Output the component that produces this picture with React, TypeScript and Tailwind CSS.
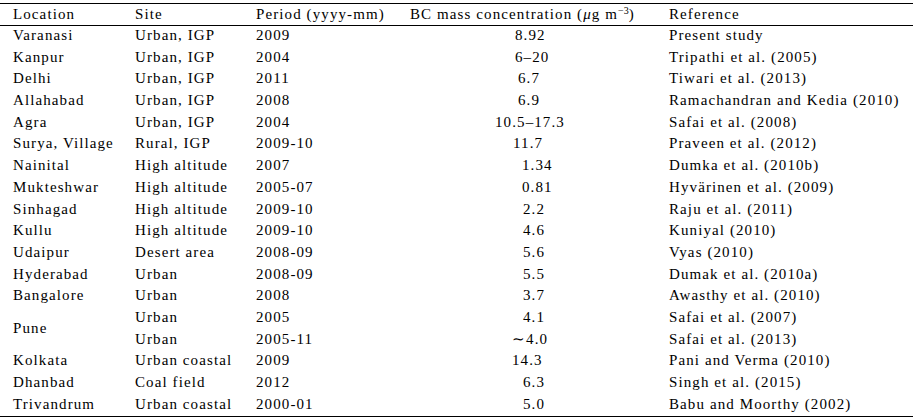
import React from "react";

type Row = {
  loc?: string;
  span?: boolean;
  site: string;
  period: string;
  val: string;
  pad: string;
  ref: string;
};

const rows: Row[] = [
  { loc: "Varanasi", site: "Urban, IGP", period: "2009", val: "8.92", pad: "pl-[109px]", ref: "Present study" },
  { loc: "Kanpur", site: "Urban, IGP", period: "2004", val: "6–20", pad: "pl-[109px]", ref: "Tripathi et al. (2005)" },
  { loc: "Delhi", site: "Urban, IGP", period: "2011", val: "6.7", pad: "pl-[112px]", ref: "Tiwari et al. (2013)" },
  { loc: "Allahabad", site: "Urban, IGP", period: "2008", val: "6.9", pad: "pl-[112px]", ref: "Ramachandran and Kedia (2010)" },
  { loc: "Agra", site: "Urban, IGP", period: "2004", val: "10.5–17.3", pad: "pl-[89px]", ref: "Safai et al. (2008)" },
  { loc: "Surya, Village", site: "Rural, IGP", period: "2009-10", val: "11.7", pad: "pl-[107px]", ref: "Praveen et al. (2012)" },
  { loc: "Nainital", site: "High altitude", period: "2007", val: "1.34", pad: "pl-[116px]", ref: "Dumka et al. (2010b)" },
  { loc: "Mukteshwar", site: "High altitude", period: "2005-07", val: "0.81", pad: "pl-[116px]", ref: "Hyvärinen et al. (2009)" },
  { loc: "Sinhagad", site: "High altitude", period: "2009-10", val: "2.2", pad: "pl-[117px]", ref: "Raju et al. (2011)" },
  { loc: "Kullu", site: "High altitude", period: "2009-10", val: "4.6", pad: "pl-[117px]", ref: "Kuniyal (2010)" },
  { loc: "Udaipur", site: "Desert area", period: "2008-09", val: "5.6", pad: "pl-[117px]", ref: "Vyas (2010)" },
  { loc: "Hyderabad", site: "Urban", period: "2008-09", val: "5.5", pad: "pl-[117px]", ref: "Dumak et al. (2010a)" },
  { loc: "Bangalore", site: "Urban", period: "2008", val: "3.7", pad: "pl-[117px]", ref: "Awasthy et al. (2010)" },
  { loc: "Pune", span: true, site: "Urban", period: "2005", val: "4.1", pad: "pl-[117px]", ref: "Safai et al. (2007)" },
  { site: "Urban", period: "2005-11", val: "∼4.0", pad: "pl-[106px]", ref: "Safai et al. (2013)" },
  { loc: "Kolkata", site: "Urban coastal", period: "2009", val: "14.3", pad: "pl-[106px]", ref: "Pani and Verma (2010)" },
  { loc: "Dhanbad", site: "Coal field", period: "2012", val: "6.3", pad: "pl-[117px]", ref: "Singh et al. (2015)" },
  { loc: "Trivandrum", site: "Urban coastal", period: "2000-01", val: "5.0", pad: "pl-[117px]", ref: "Babu and Moorthy (2002)" },
];

const cell = "leading-[18px] whitespace-nowrap";

export default function App() {
  return (
    <div
      className="w-[913px] h-[420px] bg-white text-black pt-[3px] text-[15px] tracking-[1.1px] overflow-hidden"
      style={{ fontFamily: '"Liberation Serif", "Times New Roman", serif' }}
    >
      <div className="h-px bg-black" />
      <div className="grid grid-cols-[122px_121px_150px_263px_1fr] pl-[13px] h-[21px] items-center">
        <div className="leading-[21px] whitespace-nowrap">Location</div>
        <div className="leading-[21px] whitespace-nowrap">Site</div>
        <div className="leading-[21px] whitespace-nowrap">Period (yyyy-mm)</div>
        <div className="leading-[21px] whitespace-nowrap pl-[4px]">
          BC mass concentration (<i>μ</i>g m
          <sup className="text-[10px] tracking-normal">−3</sup>)
        </div>
        <div className="leading-[21px] whitespace-nowrap">Reference</div>
      </div>
      <div className="h-px bg-black" />
      <div className="grid grid-cols-[122px_121px_150px_263px_1fr] auto-rows-[21.7px] pl-[13px]">
        {rows.map((r, i) => (
          <React.Fragment key={i}>
            {r.loc !== undefined &&
              (r.span ? (
                <div className={`${cell} row-span-2 self-center pb-[3px]`}>{r.loc}</div>
              ) : (
                <div className={cell}>{r.loc}</div>
              ))}
            <div className={r.loc === undefined ? `${cell} col-start-2` : cell}>{r.site}</div>
            <div className={cell}>{r.period}</div>
            <div className={`${cell} ${r.pad}`}>{r.val}</div>
            <div className={cell}>{r.ref}</div>
          </React.Fragment>
        ))}
      </div>
      <div className="h-px bg-black" />
    </div>
  );
}
